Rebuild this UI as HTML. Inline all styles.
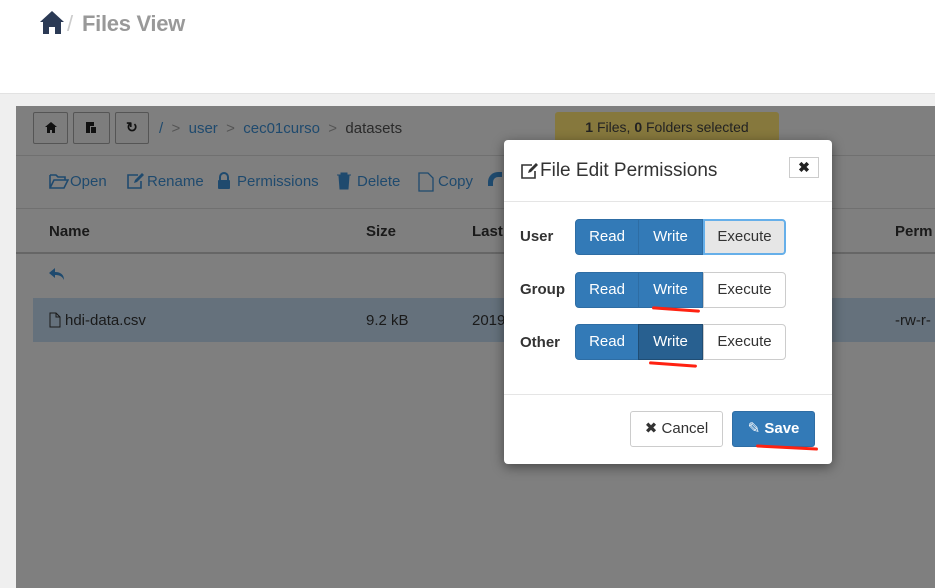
<!DOCTYPE html>
<html><head><style>
*{box-sizing:border-box;margin:0;padding:0}
body{width:935px;height:588px;overflow:hidden;background:#efefef;font-family:"Liberation Sans",Arial,sans-serif;position:relative}
.hdr{position:absolute;left:0;top:0;width:935px;height:94px;background:#fff;border-bottom:1px solid #e2e2e2}
.hdr .t{position:absolute;left:82px;top:11px;font-size:22px;color:#999;font-weight:bold;letter-spacing:-0.3px}
.hdr .sl{position:absolute;left:67px;top:11px;font-size:22px;color:#ccc}
.panel{position:absolute;left:16px;top:106px;width:919px;height:482px;background:#7f7f7f}
.a{position:absolute;white-space:nowrap}
.sb{position:absolute;top:6px;height:32px;border:1px solid #555;background:#7d7d7d;border-radius:2px}
.lnk{color:#1f4a6e}
.m{position:absolute;left:504px;top:140px;width:328px;height:324px;background:#fff;border-radius:4px;box-shadow:0 3px 12px rgba(0,0,0,.45)}
.btn{position:absolute;height:36px;font-size:15px;text-align:center;line-height:34px;border:1px solid #2e6da4}
.bl{background:#337ab7;color:#fff}
.bw{background:#fff;color:#333;border-color:#ccc}
.red{position:absolute;height:3px;background:#f21;border-radius:2px}
.tb{position:absolute;top:67px;font-size:15px;color:#1f4a6e}
.tb svg{position:absolute;left:-21px;top:-1px}
</style></head><body>
<div class="hdr">
<svg style="position:absolute;left:40px;top:11px" width="24" height="23" viewBox="0 0 24 23"><path d="M12 0L0 11h3v12h6v-7h6v7h6V11h3z" fill="#2b3a55"/></svg>
<span class="sl">/</span><span class="t">Files View</span>
</div>
<div class="panel">
<div class="sb" style="left:17px;width:35px"><svg class="a" style="left:11px;top:9px" width="12" height="11" viewBox="0 0 12 11"><path d="M6 0L0 5h2v6h3V8h2v3h3V5h2z" fill="#111"/></svg></div>
<div class="sb" style="left:57px;width:37px"><div class="a" style="left:12px;top:9px;width:8px;height:11px;background:#111"></div><div class="a" style="left:16px;top:13px;width:7px;height:8px;background:#111;border:1px solid #7d7d7d"></div></div>
<div class="sb" style="left:99px;width:34px"><span class="a" style="left:10px;top:6px;font-size:14px;color:#111;font-weight:bold">&#8635;</span></div>
<div class="a" style="left:143px;top:14px;font-size:15px;color:#555"><span class="lnk">/</span> &nbsp;&gt;&nbsp; <span class="lnk">user</span> &nbsp;&gt;&nbsp; <span class="lnk">cec01curso</span> &nbsp;&gt;&nbsp; <span style="color:#2a2a2a">datasets</span></div>
<div class="a" style="left:539px;top:6px;width:224px;height:30px;background:#86783d;border-radius:3px;font-size:14px;color:#222;text-align:center;line-height:30px"><b>1</b> Files, <b>0</b> Folders selected</div>
<div class="a" style="left:0;top:49px;width:919px;height:1px;background:#707070"></div>
<div class="tb" style="left:54px"><svg width="20" height="18" viewBox="0 0 20 18"><path d="M1 3h6l2 2h7v3M1 3v13h14l4-8H5L1 16" fill="none" stroke="#1f4a6e" stroke-width="1.6"/></svg>Open</div>
<div class="tb" style="left:131px"><svg width="20" height="18" viewBox="0 0 20 18"><path d="M12 3H2v13h13V9" fill="none" stroke="#1f4a6e" stroke-width="1.6"/><path d="M8 11l1-3 7-7 2 2-7 7z" fill="#1f4a6e"/></svg>Rename</div>
<div class="tb" style="left:221px"><svg width="16" height="18" viewBox="0 0 16 18"><path d="M4 8V5a4 4 0 0 1 8 0v3" fill="none" stroke="#1f4a6e" stroke-width="2"/><rect x="2" y="8" width="12" height="9" rx="1" fill="#1f4a6e"/></svg>Permissions</div>
<div class="tb" style="left:341px"><svg width="16" height="18" viewBox="0 0 16 18"><path d="M1 3h14M5 3V1h6v2M3 4h10l-1 13H4z" fill="#1f4a6e" stroke="#1f4a6e"/></svg>Delete</div>
<div class="tb" style="left:422px"><svg width="18" height="20" viewBox="0 0 18 20"><path d="M2 1h9l5 5v13H2z" fill="none" stroke="#1f4a6e" stroke-width="1.3"/></svg>Copy</div>
<div class="a" style="left:472px;top:66px;width:14px;height:14px;border-top:5px solid #1f4a6e;border-left:5px solid #1f4a6e;border-radius:10px 0 0 0"></div>
<div class="a" style="left:0;top:102px;width:919px;height:1px;background:#707070"></div>
<div class="a" style="left:33px;top:117px;font-size:15px;font-weight:bold;color:#1a1a1a">Name</div>
<div class="a" style="left:350px;top:117px;font-size:15px;font-weight:bold;color:#1a1a1a">Size</div>
<div class="a" style="left:456px;top:117px;font-size:15px;font-weight:bold;color:#1a1a1a">Last</div>
<div class="a" style="left:879px;top:117px;font-size:15px;font-weight:bold;color:#1a1a1a">Perm</div>
<div class="a" style="left:0;top:146px;width:919px;height:2px;background:#666"></div>
<svg class="a" style="left:33px;top:162px" width="16" height="13" viewBox="0 0 16 13"><path d="M6 0L0 5l6 5V7c4 0 7 1 9 5 0-5-3-8-9-8z" fill="#1f4a6e"/></svg>
<div class="a" style="left:17px;top:192px;width:902px;height:44px;background:#65717c"></div>
<svg class="a" style="left:33px;top:206px" width="12" height="16" viewBox="0 0 12 16"><path d="M1 1h6l4 4v10H1z M7 1v4h4" fill="none" stroke="#1a1a1a" stroke-width="1"/></svg>
<div class="a" style="left:49px;top:206px;font-size:15px;color:#1a1a1a">hdi-data.csv</div>
<div class="a" style="left:350px;top:206px;font-size:15px;color:#1a1a1a">9.2 kB</div>
<div class="a" style="left:456px;top:206px;font-size:15px;color:#1a1a1a">2019</div>
<div class="a" style="left:879px;top:206px;font-size:15px;color:#1a1a1a">-rw-r-</div>
</div>
<div class="m">
<svg class="a" style="left:16px;top:22px" width="20" height="18" viewBox="0 0 20 18"><path d="M12 3H2v13h13V9" fill="none" stroke="#333" stroke-width="1.6"/><path d="M8 11l1-3 7-7 2 2-7 7z" fill="#333"/></svg>
<div class="a" style="left:36px;top:20px;font-size:19px;color:#333">File Edit Permissions</div>
<div class="a" style="left:285px;top:47px;width:30px;height:21px;border:1px solid #ccc;text-align:center;font-size:14px;font-weight:bold;line-height:19px;color:#222;top:17px">&#10006;</div>
<div class="a" style="left:0;top:61px;width:328px;height:1px;background:#e5e5e5"></div>
<div class="a" style="left:16px;top:88px;font-size:15px;font-weight:bold;color:#333">User</div>
<div class="a" style="left:16px;top:141px;font-size:15px;font-weight:bold;color:#333">Group</div>
<div class="a" style="left:16px;top:194px;font-size:15px;font-weight:bold;color:#333">Other</div>
<div class="btn bl" style="left:71px;top:79px;width:64px;border-radius:4px 0 0 4px">Read</div>
<div class="btn bl" style="left:134px;top:79px;width:65px">Write</div>
<div class="btn" style="left:199px;top:79px;width:83px;background:#e6e6e6;color:#333;border:2px solid #66afe9;border-radius:0 4px 4px 0;line-height:32px">Execute</div>
<div class="btn bl" style="left:71px;top:132px;width:64px;border-radius:4px 0 0 4px">Read</div>
<div class="btn bl" style="left:134px;top:132px;width:65px">Write</div>
<div class="btn bw" style="left:199px;top:132px;width:83px;border-radius:0 4px 4px 0">Execute</div>
<div class="btn bl" style="left:71px;top:184px;width:64px;border-radius:4px 0 0 4px">Read</div>
<div class="btn" style="left:134px;top:184px;width:65px;background:#286090;color:#fff;border-color:#204d74">Write</div>
<div class="btn bw" style="left:199px;top:184px;width:83px;border-radius:0 4px 4px 0">Execute</div>
<div class="red" style="left:148px;top:168px;width:48px;transform:rotate(4deg)"></div>
<div class="red" style="left:145px;top:223px;width:48px;transform:rotate(4deg)"></div>
<div class="a" style="left:0;top:254px;width:328px;height:1px;background:#e5e5e5"></div>
<div class="btn bw" style="left:126px;top:271px;width:93px;border-radius:3px">&#10006; Cancel</div>
<div class="btn bl" style="left:228px;top:271px;width:83px;border-radius:3px">&#9998; <b>Save</b></div>
<div class="red" style="left:252px;top:306px;width:62px;transform:rotate(3deg)"></div>
</div>
</body></html>
